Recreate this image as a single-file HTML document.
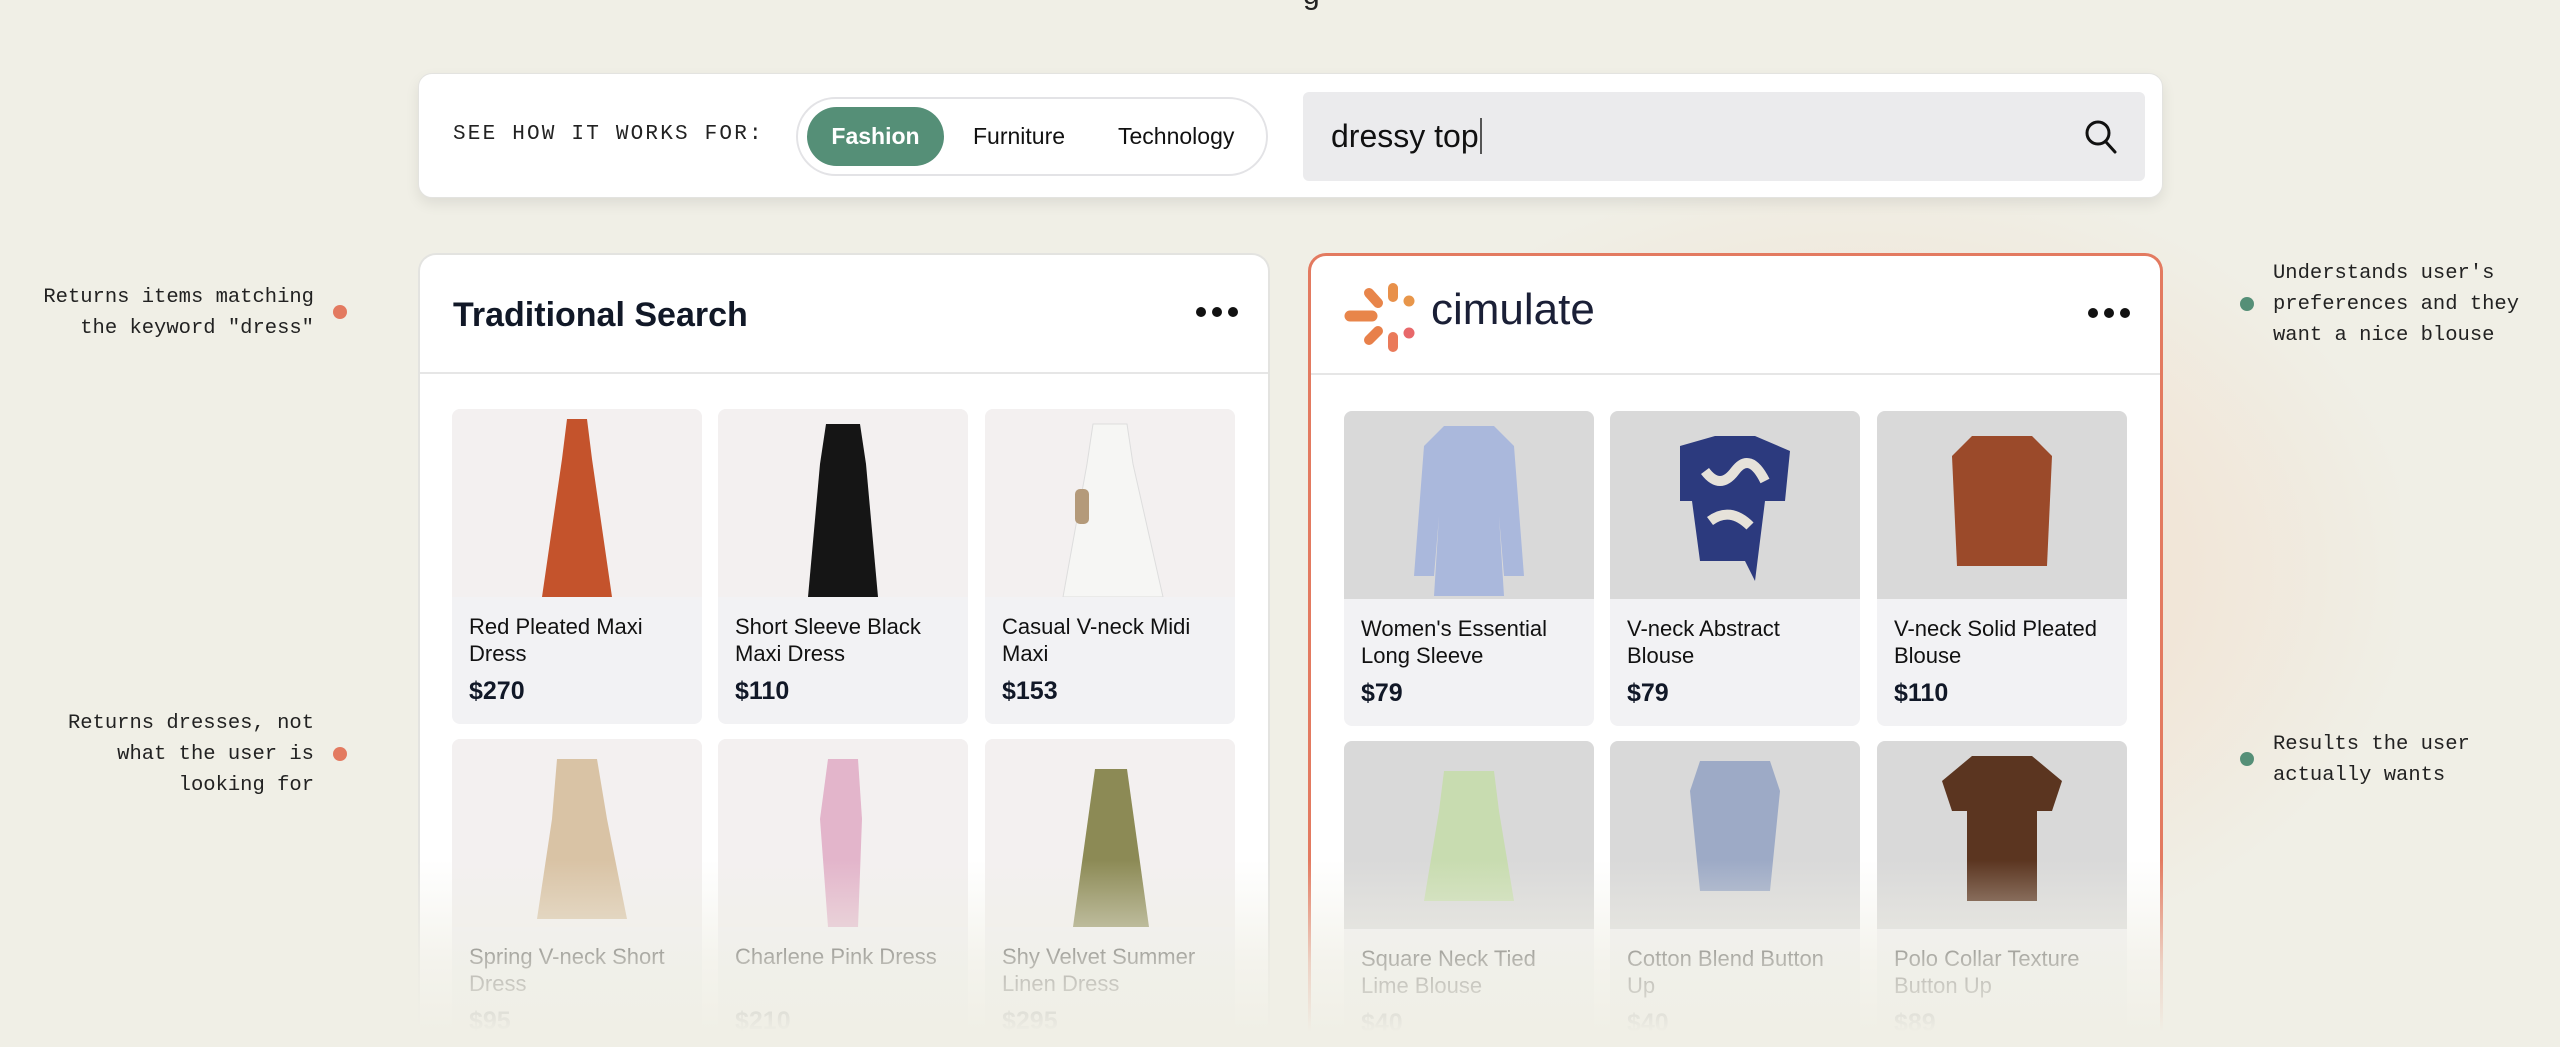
<!DOCTYPE html>
<html><head><meta charset="utf-8"><style>
*{box-sizing:border-box;margin:0;padding:0}
html,body{width:2560px;height:1047px;overflow:hidden;background:#f0efe6}
#root{width:2560px;height:1047px;overflow:hidden;position:relative;font-family:"Liberation Sans",sans-serif;color:#111827}
.glow{position:absolute;left:1200px;top:180px;width:1200px;height:867px;background:radial-gradient(ellipse at 55% 45%,rgba(245,200,170,.55),rgba(240,239,230,0) 60%)}
.top{position:absolute;left:418px;top:73px;width:1745px;height:125px;background:#fff;border-radius:14px;border:1px solid #e3e3e0;box-shadow:0 6px 14px rgba(0,0,0,.08)}
.lbl{position:absolute;left:34px;top:49px;font-family:"Liberation Mono",monospace;font-size:21px;letter-spacing:2.2px;color:#222}
.pills{position:absolute;left:377px;top:23px;width:472px;height:79px;border:2px solid #e3e3e6;border-radius:40px}
.pill{position:absolute;top:8px;height:59px;line-height:59px;font-size:23px;color:#111}
.pill.on{left:9px;width:137px;background:#558f77;color:#fff;font-weight:bold;border-radius:30px;text-align:center}
.sbox{position:absolute;left:884px;top:18px;width:842px;height:89px;background:#ebebed;border-radius:6px}
.sbox .t{position:absolute;left:28px;top:26px;font-size:32px;color:#111}
.panel{position:absolute;top:253px;width:852px;height:794px;background:#fff;border:2px solid #e3e3e0;border-bottom:none;border-radius:18px 18px 0 0;overflow:hidden}
.panel.r{border:3px solid #e37a60;border-bottom:none;width:855px}
.hd{height:119px;border-bottom:2px solid #e6e6e6;position:relative}
.title{position:absolute;left:33px;top:41px;font-size:34px;font-weight:bold}
.dots{position:absolute;right:30px;top:52px;display:flex;gap:6px}
.dots i{width:10px;height:10px;border-radius:50%;background:#111;display:block}
.card{position:absolute;width:250px;height:315px;background:#f2f2f4;border-radius:8px;overflow:hidden}
.img{height:188px;background:#f3f0f0;position:relative}
.r .img{background:#d9d9d9}
.img svg{position:absolute;left:0;top:0}
.nm{position:absolute;left:17px;top:204px;width:225px;font-size:22px;line-height:27px;color:#111}
.pr{position:absolute;left:17px;top:268px;font-size:25px;font-weight:bold}
.note{position:absolute;font-family:"Liberation Mono",monospace;font-size:20.5px;line-height:31px;color:#222}
.dot{position:absolute;width:14px;height:14px;border-radius:50%}
.fade{position:absolute;left:0;top:860px;width:2560px;height:187px;background:linear-gradient(rgba(240,239,230,0),rgba(240,239,230,.75) 55%,#f0efe6 92%)}
</style></head><body><div id="root">
<div class="glow"></div>
<div style="position:absolute;left:1303px;top:-22px;font-size:30px;color:#222">g</div>

<div class="top">
<div class="lbl">SEE HOW IT WORKS FOR:</div>
<div class="pills"><div class="pill on">Fashion</div><div class="pill" style="left:175px">Furniture</div><div class="pill" style="left:320px">Technology</div></div>
<div class="sbox"><div class="t">dressy top<span style="border-left:2px solid #555;margin-left:1px"></span></div>
<svg style="position:absolute;left:780px;top:26px" width="36" height="38" viewBox="0 0 36 38"><circle cx="15" cy="15" r="11" fill="none" stroke="#111" stroke-width="3"/><line x1="23" y1="24" x2="32" y2="34" stroke="#111" stroke-width="3" stroke-linecap="round"/></svg></div>
</div>

<div class="note" style="left:20px;top:282px;width:294px;text-align:right">Returns items matching<br>the keyword "dress"</div>
<div class="dot" style="left:333px;top:305px;background:#e37a60"></div>
<div class="note" style="left:20px;top:708px;width:294px;text-align:right">Returns dresses, not<br>what the user is<br>looking for</div>
<div class="dot" style="left:333px;top:747px;background:#e37a60"></div>
<div class="dot" style="left:2240px;top:297px;background:#558f77"></div>
<div class="note" style="left:2273px;top:258px">Understands user's<br>preferences and they<br>want a nice blouse</div>
<div class="dot" style="left:2240px;top:752px;background:#558f77"></div>
<div class="note" style="left:2273px;top:729px">Results the user<br>actually wants</div>

<div class="panel" style="left:418px">
<div class="hd"><div class="title">Traditional Search</div><div class="dots"><i></i><i></i><i></i></div></div>
<div class="card" style="left:32px;top:154px"><div class="img"><svg width="250" height="188"><path d="M115 10h20l5 40 20 138h-70l20-138z" fill="#c4532c"/></svg></div><div class="nm">Red Pleated Maxi Dress</div><div class="pr">$270</div></div>
<div class="card" style="left:298px;top:154px"><div class="img"><svg width="250" height="188"><path d="M108 15h34l6 40 12 133h-70l12-133z" fill="#151515"/></svg></div><div class="nm">Short Sleeve Black Maxi Dress</div><div class="pr">$110</div></div>
<div class="card" style="left:565px;top:154px"><div class="img"><svg width="250" height="188"><path d="M108 15h34l6 40 30 133h-100l24-133z" fill="#f6f6f4" stroke="#ddd"/><rect x="90" y="80" width="14" height="35" rx="5" fill="#b49a7a"/></svg></div><div class="nm">Casual V-neck Midi Maxi</div><div class="pr">$153</div></div>
<div class="card" style="left:32px;top:484px"><div class="img"><svg width="250" height="188"><path d="M105 20h40l10 60 20 100h-90l15-100z" fill="#d9c3a5"/></svg></div><div class="nm">Spring V-neck Short Dress</div><div class="pr">$95</div></div>
<div class="card" style="left:298px;top:484px"><div class="img"><svg width="250" height="188"><path d="M110 20h30l4 60 -4 108h-30l-8-108z" fill="#e3b5cb"/></svg></div><div class="nm">Charlene Pink Dress</div><div class="pr">$210</div></div>
<div class="card" style="left:565px;top:484px"><div class="img"><svg width="250" height="188"><path d="M110 30h32l22 158h-76z" fill="#8c8a55"/></svg></div><div class="nm">Shy Velvet Summer Linen Dress</div><div class="pr">$295</div></div>
</div>

<div class="panel r" style="left:1308px">
<div class="hd">
<svg style="position:absolute;left:33px;top:25px" width="75" height="75" viewBox="1341 278 75 75">
<g stroke-linecap="round" fill="none">
<line x1="1347" y1="313" x2="1369" y2="313" stroke="#e8854a" stroke-width="11"/>
<line x1="1366" y1="290" x2="1375" y2="300" stroke="#e8854a" stroke-width="10"/>
<line x1="1390" y1="285" x2="1390" y2="294" stroke="#e8904a" stroke-width="10"/>
<line x1="1366" y1="337" x2="1375" y2="328" stroke="#e8804a" stroke-width="10"/>
<line x1="1390" y1="334" x2="1390" y2="344" stroke="#ea7a5a" stroke-width="10"/>
</g>
<circle cx="1406" cy="298" r="5.5" fill="#e8964a"/><circle cx="1406" cy="330" r="5.5" fill="#e8686a"/>
</svg>
<div style="position:absolute;left:120px;top:29px;font-size:44px;color:#1a1f36">cimulate</div>
<div class="dots"><i></i><i></i><i></i></div></div>
<div class="card" style="left:33px;top:155px"><div class="img"><svg width="250" height="188"><path d="M100 15h50l20 20 10 130h-20l-5-60 5 80h-70l5-80-5 60h-20l10-130z" fill="#aab8dc"/></svg></div><div class="nm">Women's Essential Long Sleeve</div><div class="pr">$79</div></div>
<div class="card" style="left:299px;top:155px"><div class="img"><svg width="250" height="188"><path d="M70 35l35-10 40 0 35 15-5 50-20 0-10 80-10-20h-45l-8-60-12 0z" fill="#2c3a7e"/><path d="M95 60q15 20 30 0t30 10M100 110q20-15 40 5" stroke="#e6e2da" stroke-width="10" fill="none"/></svg></div><div class="nm">V-neck Abstract Blouse</div><div class="pr">$79</div></div>
<div class="card" style="left:566px;top:155px"><div class="img"><svg width="250" height="188"><path d="M95 25h60l20 20-5 110h-90l-5-110z" fill="#9b4a2a"/></svg></div><div class="nm">V-neck Solid Pleated Blouse</div><div class="pr">$110</div></div>
<div class="card" style="left:33px;top:485px"><div class="img"><svg width="250" height="188"><path d="M100 30h50l5 40 15 90h-90l15-90z" fill="#c8dcb0"/></svg></div><div class="nm">Square Neck Tied Lime Blouse</div><div class="pr">$40</div></div>
<div class="card" style="left:299px;top:485px"><div class="img"><svg width="250" height="188"><path d="M90 20h70l10 30-10 100h-70l-10-100z" fill="#9daac6"/></svg></div><div class="nm">Cotton Blend Button Up</div><div class="pr">$40</div></div>
<div class="card" style="left:566px;top:485px"><div class="img"><svg width="250" height="188"><path d="M95 15h60l30 25-10 30h-15l0 90h-70l0-90h-15l-10-30z" fill="#5b3520"/></svg></div><div class="nm">Polo Collar Texture Button Up</div><div class="pr">$89</div></div>
</div>

<div class="fade"></div>
</div></body></html>
